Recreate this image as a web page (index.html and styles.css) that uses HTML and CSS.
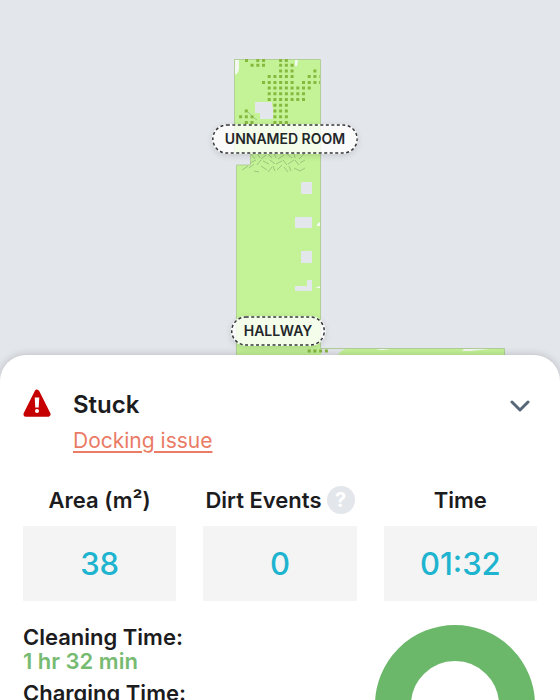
FILE: index.html
```html
<!DOCTYPE html>
<html lang="en">
<head>
<meta charset="utf-8">
<meta name="viewport" content="width=device-width, initial-scale=1">
<title>Cleaning status</title>
<link rel="stylesheet" href="styles.css">
</head>
<body>
<main class="screen">
  <section class="map" aria-label="Cleaning map">
    <div class="plan">
      <svg class="plan-drawing" viewBox="0 0 560 384" aria-hidden="true">
        <path class="floor" d="M234.500 59.500H320.500V348.500H504.500V384H236.500V165H250.500V153H234.500Z"/>
        <g class="gap">
          <path d="M321 349H346Q338 350 336 362H329V355H321Z"/>
          <path d="M255 102H272V107H273V119H260V113H255Z"/>
          <path d="M301 182H312V194H301ZM295 217H312V228H295ZM301 251H312V263H301ZM295 286H307V280H312V291H295Z"/>
        </g>
        <g class="scuff">
          <path d="M235 60H239V68Q239 73 235 75ZM295 60H298L297 66H295ZM320 222L317 224V226H320ZM320 286L315 288H320ZM464 349H490L470 351H462ZM380 349H390L384 350H376Z"/>
        </g>
        <g class="dirt">
          <path d="M245 60.500h3M256.300 60.500h8.720M279.100 60.500h8.720"/>
          <path d="M250.600 65.200h14.440M279.100 65.200h14.440"/>
          <path d="M279.100 70.900h14.440M313.400 70.900h3"/>
          <path d="M267.700 76.600h25.880M307.700 76.600h12"/>
          <path d="M262 82.400h31.600M302 82.400h18"/>
          <path d="M267.700 88.100h43.040"/>
          <path d="M267.700 93.800h37.320"/>
          <path d="M267.700 99.500h37.320"/>
          <path d="M273.400 105.300h14.440"/>
          <path d="M244.800 111h3M273.400 111h14.440"/>
          <path d="M239.100 116.700h14.440M273.400 116.700h14.440"/>
          <path d="M244.800 122.400h8.720M273.400 122.400h14.440M307.700 351h20.160"/>
        </g>
        <path class="hatch" d="M248 112l4 4M253 117l4 3M251 154l4 5M257 153l3 5M261 159l5-4M268 154l4 4M274 153l2 5M278 159l6-4M287 154l5 4M294 153l1 5M299 159l5-5M250 163l6-3M257 165l4-5M263 161l6 3M270 160l5 4M276 164l6-3M283 160l4 5M288 164l6-4M295 160l4 5M300 163l5-3M242 170l6-4M249 168l5-4M254 171l5 1M261 166l6 4M268 172l4-5M273 166l2 5M277 170l5-5M284 167l4 5M289 166l2 5M294 168l6 3M300 171l5-3"/>
      </svg>
      <span class="room room-unnamed">UNNAMED ROOM<svg class="room-edge" aria-hidden="true"><rect x="1" y="1" rx="14"/></svg></span>
      <span class="room room-hallway">HALLWAY<svg class="room-edge" aria-hidden="true"><rect x="1" y="1" rx="14"/></svg></span>
    </div>
  </section>

  <section class="sheet">
    <header class="status">
      <svg class="alert" viewBox="0 0 28 28" role="img" aria-label="Error">
        <path d="M14 3.200L25 25.200H3Z" fill="#c60000" stroke="#c60000" stroke-width="5" stroke-linejoin="round"/>
        <path d="M11.700 8.500H16.300L15.700 18.500H12.300Z" fill="#fff"/>
        <circle cx="14" cy="22" r="2" fill="#fff"/>
      </svg>
      <div class="status-text">
        <h1 class="status-title">Stuck</h1>
        <a class="status-link" href="#docking">Docking issue</a>
      </div>
      <button class="collapse" type="button" aria-label="Collapse">
        <svg class="chevron" viewBox="0 0 20 12" aria-hidden="true"><path d="M2 2L10 10L18 2"/></svg>
      </button>
    </header>

    <div class="stats">
      <div class="stat">
        <h2 class="stat-name">Area (m²)</h2>
        <div class="stat-value">38</div>
      </div>
      <div class="stat">
        <h2 class="stat-name">Dirt Events <button class="help" type="button" aria-label="About dirt events">?</button></h2>
        <div class="stat-value">0</div>
      </div>
      <div class="stat">
        <h2 class="stat-name">Time</h2>
        <div class="stat-value">01:32</div>
      </div>
    </div>

    <div class="times">
      <dl class="time-list">
        <div class="time-item">
          <dt>Cleaning Time:</dt>
          <dd>1 hr 32 min</dd>
        </div>
        <div class="time-item">
          <dt>Charging Time:</dt>
        </div>
      </dl>
      <svg class="donut" viewBox="0 0 160 160" aria-hidden="true"><circle cx="80" cy="80" r="62"/></svg>
    </div>
  </section>
</main>
</body>
</html>
```
FILE: styles.css
```css
* {
  box-sizing: border-box;
}

body {
  margin: 0;
  background: #e3e6eb;
  color: #1c1c1e;
  font-family: Inter, "Liberation Sans", sans-serif;
}

h1,
h2,
dl,
dd {
  margin: 0;
}

button {
  border: 0;
  padding: 0;
  font: inherit;
}

.screen {
  height: 100vh;
  overflow: hidden;
}

.map {
  display: flex;
  justify-content: center;
}

.plan {
  position: relative;
  flex: 0 0 560px;
}

.plan-drawing {
  display: block;
  width: 100%;
}

.floor {
  fill: #c4f297;
  stroke: #b2cf98;
}

.gap {
  fill: #e3e6eb;
}

.scuff {
  fill: #f4f8f2;
}

.dirt {
  fill: none;
  stroke: #86b83e;
  stroke-width: 3;
  stroke-dasharray: 3 2.720;
}

.hatch {
  fill: none;
  stroke: #9bc77c;
  stroke-width: 1;
}

/* Room labels are pinned to their place on the floor plan. */
.room {
  position: absolute;
  transform: translate(-50%, -50%);
  padding: 0 13px;
  border-radius: 15px;
  background: rgba(255, 255, 255, 0.800);
  box-shadow: 0 2px 6px rgba(0, 0, 0, 0.120);
  color: #24272a;
  font-size: 14px;
  font-weight: 600;
  line-height: 30px;
  white-space: nowrap;
}

.room-edge {
  position: absolute;
  inset: 0;
  width: 100%;
  height: 100%;
}

.room-edge rect {
  width: calc(100% - 2px);
  height: calc(100% - 2px);
  fill: none;
  stroke: #333639;
  stroke-width: 1.500;
  stroke-dasharray: 3 2.500;
}

.room-unnamed {
  left: 285px;
  top: 139px;
}

.room-hallway {
  left: 278px;
  top: 331px;
}

.sheet {
  position: relative;
  min-height: 400px;
  margin-top: -29px;
  padding: 32px 23px 0;
  border-radius: 26px 26px 0 0;
  background: #fff;
  box-shadow: 0 0 8px rgba(0, 0, 0, 0.200);
}

.status {
  display: flex;
  align-items: flex-start;
}

.alert {
  width: 28px;
  height: 28px;
  margin: 2px 22px 0 0;
}

.status-text {
  flex: 1;
}

.status-title {
  font-size: 24px;
  font-weight: 600;
  line-height: 36px;
}

.status-link {
  display: block;
  width: fit-content;
  color: #ea7b65;
  font-size: 21px;
  line-height: 36px;
  text-underline-offset: 3px;
}

.collapse {
  margin: 13px 7px 0 0;
  background: none;
}

.chevron {
  display: block;
  width: 20px;
  height: 12px;
  fill: none;
  stroke: #57677a;
  stroke-width: 3;
  stroke-linecap: round;
  stroke-linejoin: round;
}

.stats {
  display: grid;
  grid-template-columns: repeat(3, 1fr);
  gap: 27px;
  margin-top: 27px;
}

.stat-name {
  display: flex;
  align-items: center;
  justify-content: center;
  gap: 5px;
  height: 28px;
  font-size: 22px;
  font-weight: 600;
  white-space: nowrap;
}

.help {
  width: 28px;
  height: 28px;
  border-radius: 50%;
  background: #e3e6eb;
  color: #fff;
  font-size: 20px;
  font-weight: 700;
}

.stat-value {
  margin-top: 12px;
  background: #f4f4f4;
  color: #1eb4cf;
  font-size: 31px;
  font-weight: 500;
  line-height: 75px;
  text-align: center;
}

.times {
  display: flex;
  justify-content: space-between;
  margin-top: 24px;
}

.time-list {
  display: grid;
  align-content: start;
  gap: 8px;
  font-size: 22px;
  font-weight: 600;
  line-height: 24px;
}

.time-item dd {
  color: #77bb73;
}

.donut {
  width: 160px;
  height: 160px;
  margin-right: 2px;
}

.donut circle {
  fill: none;
  stroke: #6cb86b;
  stroke-width: 36;
}
```
